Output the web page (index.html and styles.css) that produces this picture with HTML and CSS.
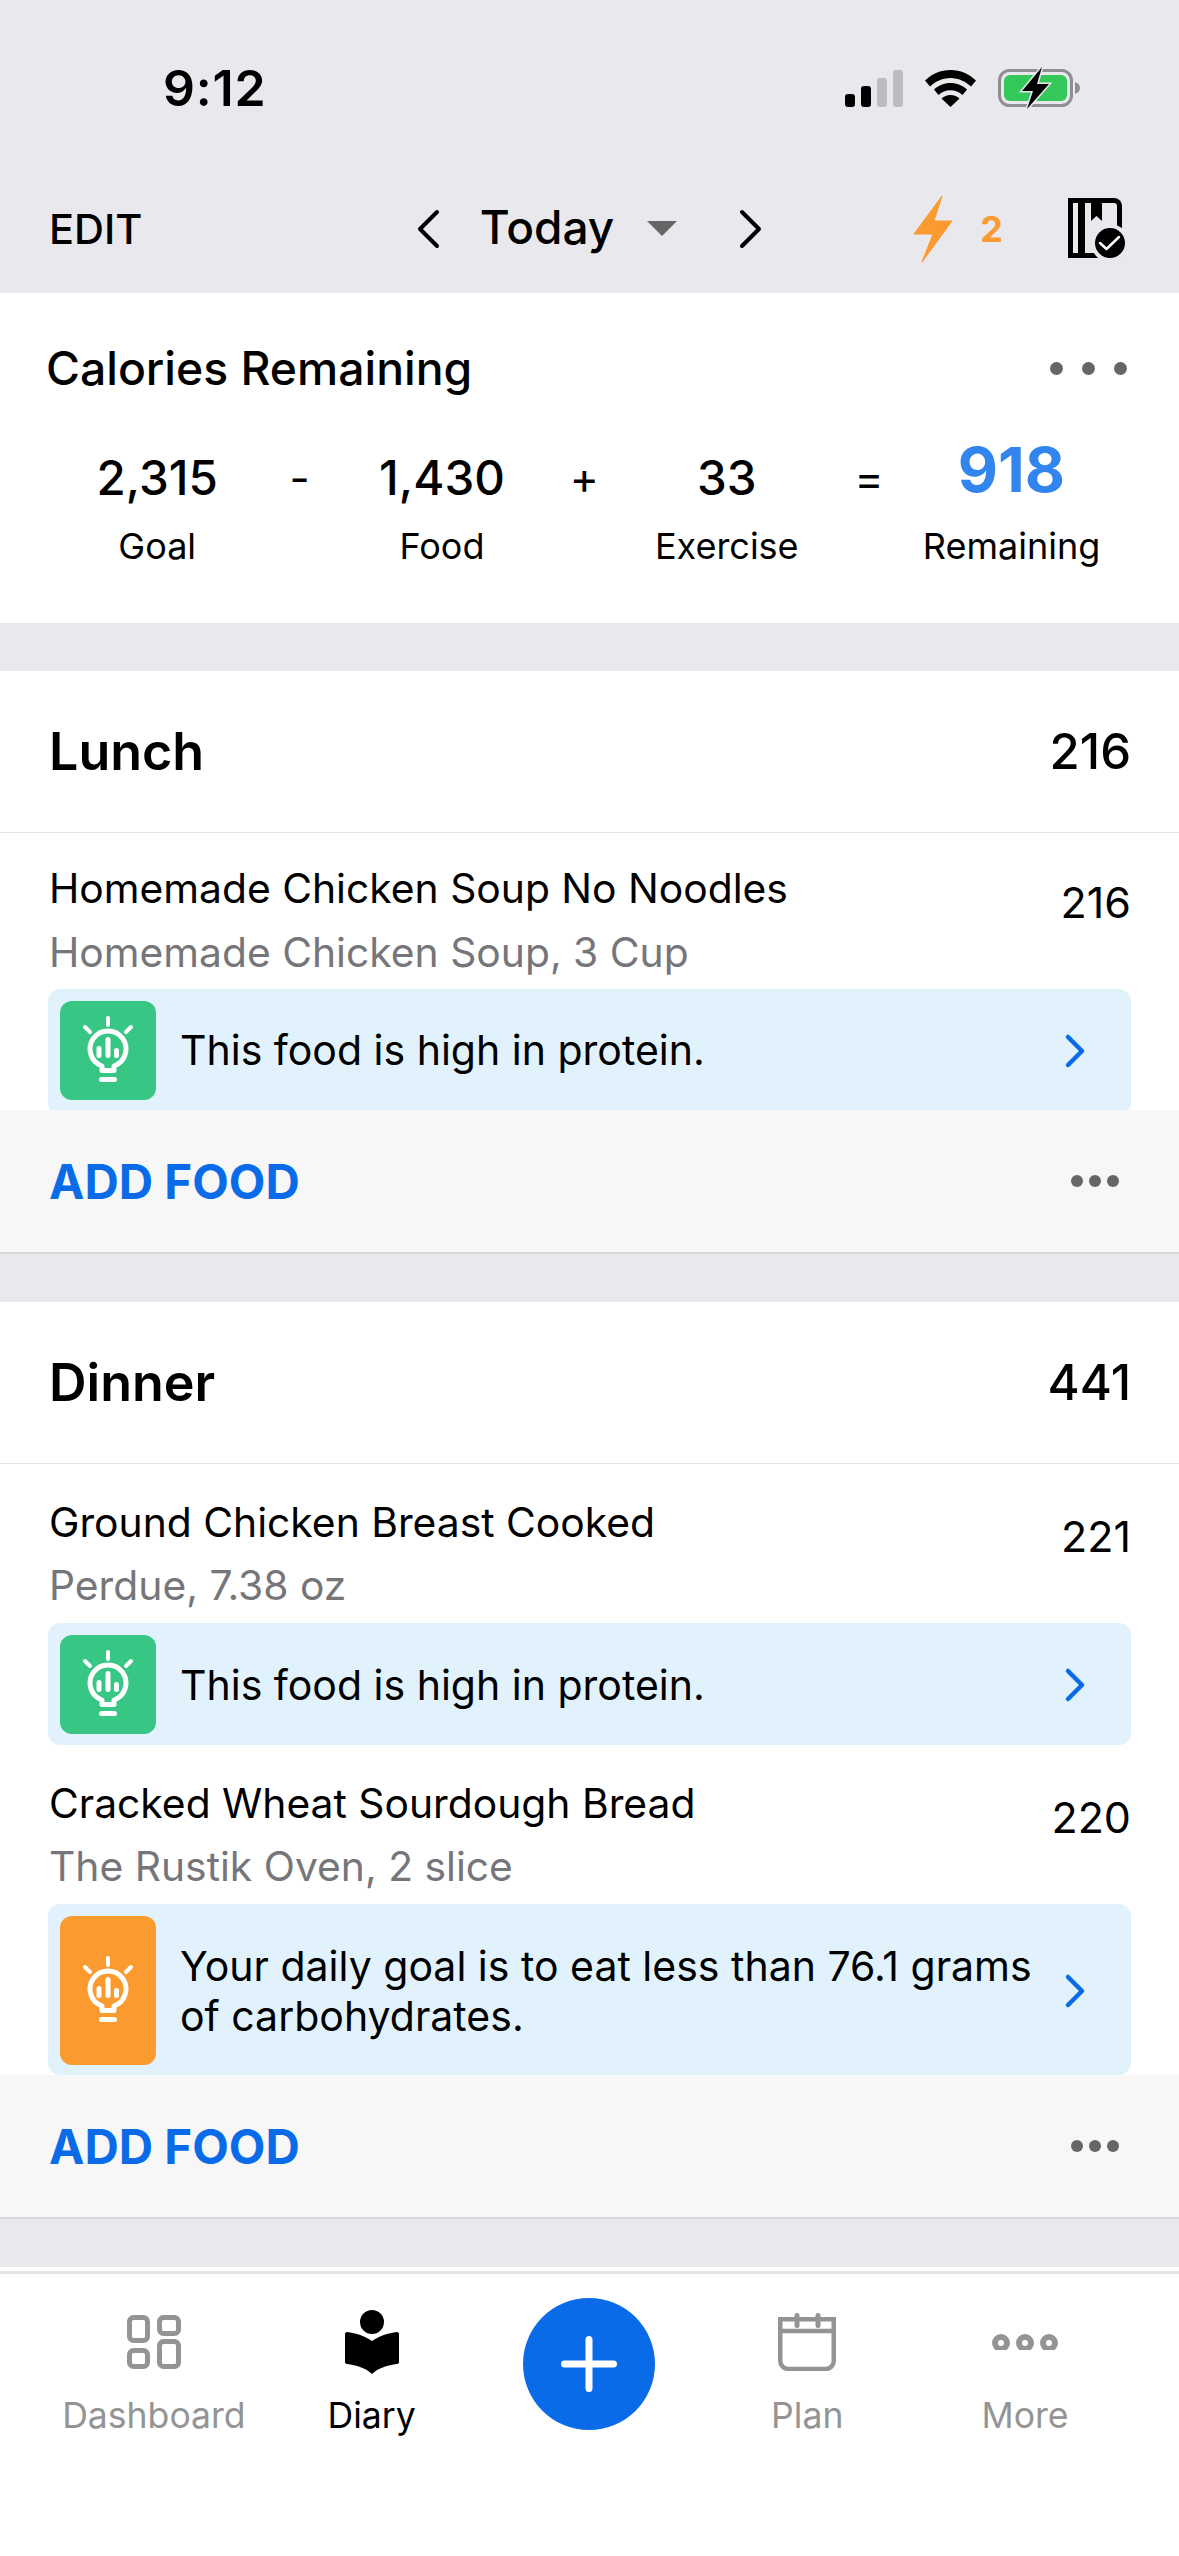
FILE: index.html
```html
<!DOCTYPE html>
<html lang="en">
<head>
    <meta charset="UTF-8">
    <meta name="viewport" content="width=device-width, initial-scale=1.0">
    <title>Diary</title>
    <link rel="stylesheet" href="styles.css">
</head>
<body>
    <svg class="defs" width="0" height="0">
        <symbol id="bulb" viewBox="0 0 60 72">
            <g fill="none" stroke="#fff" stroke-linecap="round" stroke-linejoin="round">
                <path stroke-width="4" d="M30 3v7M7 12l5 5M53 12l-5 5"/>
                <path stroke-width="5" d="M24 51A18 18 0 1 1 36 51v4.500H24z"/>
                <path stroke-width="5" d="M23.500 64.500h13"/>
                <path stroke-width="5" d="M21 33.500v7M30 24.500v16M38.500 35.500v5"/>
            </g>
        </symbol>
        <symbol id="chevron-blue" viewBox="0 0 24 36">
            <path d="M5 4l14 14L5 32" fill="none" stroke="#0a6be8" stroke-width="4.5" stroke-linecap="round" stroke-linejoin="round"/>
        </symbol>
    </svg>

    <header class="top">
        <div class="status">
            <span class="time">9:12</span>
            <div class="status-icons">
                <svg width="58" height="37" viewBox="0 0 58 37">
                    <rect x="0" y="24" width="10" height="13" rx="3" fill="#000"/>
                    <rect x="16" y="16" width="10" height="21" rx="3" fill="#000"/>
                    <rect x="32" y="8" width="10" height="29" rx="3" fill="#bcbcc2"/>
                    <rect x="48" y="0" width="10" height="37" rx="3" fill="#bcbcc2"/>
                </svg>
                <svg width="51" height="37" viewBox="0 0 51 37">
                    <path d="M25.500 0C15.500 0 7 4 0 10.500l5 6C10.500 11.500 17.500 8 25.500 8S40.500 11.500 46 16.500l5-6C44 4 35.500 0 25.500 0z" fill="#000"/>
                    <path d="M25.500 13c-6.500 0-12 2.500-16.500 6.500l4.500 5.500c3.300-3 7.300-4.800 12-4.800s8.700 1.800 12 4.800l4.500-5.500c-4.500-4-10-6.500-16.500-6.500z" fill="#000"/>
                    <path d="M25.500 25c-3.500 0-6.500 1.300-9 3.500l9 8.500 9-8.500c-2.500-2.200-5.500-3.500-9-3.500z" fill="#000"/>
                </svg>
                <svg width="83" height="42" viewBox="0 0 83 42">
                    <rect x="1.500" y="3.500" width="72" height="35" rx="10" fill="none" stroke="#8e8e93" stroke-width="3"/>
                    <rect x="6" y="8" width="63" height="26" rx="6" fill="#34c759"/>
                    <path d="M77 15c3 1 5 3 5 6s-2 5-5 6z" fill="#8e8e93"/>
                    <path d="M44 0L24 24h11l-6 18 22-25H39z" fill="#000" stroke="#e9e9ed" stroke-width="3" paint-order="stroke"/>
                </svg>
            </div>
        </div>
        <nav class="nav">
            <span class="edit">EDIT</span>
            <div class="date-picker">
                <svg width="24" height="40" viewBox="0 0 24 40"><path d="M21 3L4 20l17 17" fill="none" stroke="#000" stroke-width="4" stroke-linecap="round" stroke-linejoin="round"/></svg>
                <span class="today">Today</span>
                <span class="caret"></span>
                <svg width="24" height="40" viewBox="0 0 24 40"><path d="M3 3l17 17L3 37" fill="none" stroke="#000" stroke-width="4" stroke-linecap="round" stroke-linejoin="round"/></svg>
            </div>
            <div class="nav-right">
                <svg width="39" height="66" viewBox="0 0 39 66"><path d="M28 0L0 38h19L8 66l30-41H20z" fill="#fa9a2f" stroke="#fa9a2f" stroke-linejoin="round"/></svg>
                <span class="streak">2</span>
                <svg class="log-icon" width="58" height="62" viewBox="0 0 58 62">
                    <path d="M0 0h46a8 8 0 0 1 8 8v52H0z" fill="#000"/>
                    <rect x="5" y="5" width="5" height="50" fill="#e9e9ed"/>
                    <path d="M17 5h29a3 3 0 0 1 3 3v47H17z" fill="#e9e9ed"/>
                    <path d="M23 5h11v18l-5.500-5L23 23z" fill="#000"/>
                    <circle cx="42" cy="45" r="19" fill="#e9e9ed"/>
                    <circle cx="42" cy="45" r="15" fill="#000"/>
                    <path d="M32 45l6.500 6L51 39" fill="none" stroke="#fff" stroke-width="2.500" stroke-linecap="round" stroke-linejoin="round"/>
                </svg>
            </div>
        </nav>
    </header>

    <main class="content">
        <section class="calories">
            <div class="calories-head">
                <h2>Calories Remaining</h2>
                <div class="dots dots-large"><i></i><i></i><i></i></div>
            </div>
            <div class="sum">
                <div class="sum-col"><b>2,315</b><small>Goal</small></div>
                <div class="sum-op">-</div>
                <div class="sum-col"><b>1,430</b><small>Food</small></div>
                <div class="sum-op">+</div>
                <div class="sum-col"><b>33</b><small>Exercise</small></div>
                <div class="sum-op">=</div>
                <div class="sum-col sum-result"><b>918</b><small>Remaining</small></div>
            </div>
        </section>

        <section class="meal">
            <div class="meal-head"><h3>Lunch</h3><span>216</span></div>
            <div class="food food-first">
                <div class="food-text">
                    <div class="food-name">Homemade Chicken Soup No Noodles</div>
                    <div class="food-sub">Homemade Chicken Soup, 3 Cup</div>
                </div>
                <span class="food-cal">216</span>
            </div>
            <div class="tip tip-cut">
                <div class="tip-icon"><svg width="60" height="72"><use href="#bulb"/></svg></div>
                <p>This food is high in protein.</p>
                <svg class="tip-arrow" width="24" height="36"><use href="#chevron-blue"/></svg>
            </div>
            <div class="meal-foot">
                <span class="add-food">ADD FOOD</span>
                <div class="dots"><i></i><i></i><i></i></div>
            </div>
        </section>

        <section class="meal">
            <div class="meal-head"><h3>Dinner</h3><span>441</span></div>
            <div class="food">
                <div class="food-text">
                    <div class="food-name">Ground Chicken Breast Cooked</div>
                    <div class="food-sub">Perdue, 7.38 oz</div>
                </div>
                <span class="food-cal">221</span>
            </div>
            <div class="tip">
                <div class="tip-icon"><svg width="60" height="72"><use href="#bulb"/></svg></div>
                <p>This food is high in protein.</p>
                <svg class="tip-arrow" width="24" height="36"><use href="#chevron-blue"/></svg>
            </div>
            <div class="food">
                <div class="food-text">
                    <div class="food-name">Cracked Wheat Sourdough Bread</div>
                    <div class="food-sub">The Rustik Oven, 2 slice</div>
                </div>
                <span class="food-cal">220</span>
            </div>
            <div class="tip tip-tall">
                <div class="tip-icon tip-icon-orange"><svg width="60" height="72"><use href="#bulb"/></svg></div>
                <p>Your daily goal is to eat less than 76.1 grams of carbohydrates.</p>
                <svg class="tip-arrow" width="24" height="36"><use href="#chevron-blue"/></svg>
            </div>
            <div class="meal-foot">
                <span class="add-food">ADD FOOD</span>
                <div class="dots"><i></i><i></i><i></i></div>
            </div>
        </section>

        <section class="meal meal-next"></section>
    </main>

    <footer class="tabs">
        <div class="tab">
            <div class="tab-icon">
                <svg width="54" height="54" viewBox="0 0 54 54">
                    <g fill="none" stroke="#949494" stroke-width="5">
                        <rect x="2.500" y="2.500" width="18" height="23" rx="4"/>
                        <rect x="32.500" y="2.500" width="19" height="16" rx="4"/>
                        <rect x="2.500" y="35.500" width="18" height="16" rx="4"/>
                        <rect x="32.500" y="26.500" width="19" height="25" rx="4"/>
                    </g>
                </svg>
            </div>
            <span>Dashboard</span>
        </div>
        <div class="tab tab-active">
            <div class="tab-icon">
                <svg width="54" height="64" viewBox="0 0 54 64">
                    <ellipse cx="27" cy="12" rx="12" ry="12" fill="#000"/>
                    <path d="M2 22c9 1 18 4 25 9 7-5 16-8 25-9 1 0 2 1 2 2v28c0 1-1 2-2 2-9 1-19 4-25 10-6-6-16-9-25-10-1 0-2-1-2-2V24c0-1 1-2 2-2z" fill="#000"/>
                </svg>
            </div>
            <span>Diary</span>
        </div>
        <div class="tab tab-add">
            <div class="add-button">
                <svg width="56" height="56" viewBox="0 0 56 56"><path d="M28 3.500v49M3.500 28h49" stroke="#fff" stroke-width="7" stroke-linecap="round"/></svg>
            </div>
        </div>
        <div class="tab">
            <div class="tab-icon">
                <svg width="58" height="58" viewBox="0 0 58 58">
                    <g fill="none" stroke="#949494" stroke-width="4.500">
                        <path d="M2.250 6.250h53.500V48a8 8 0 0 1-8 8h-37.500a8 8 0 0 1-8-8z"/>
                        <path d="M2.250 18h53.500"/>
                        <path stroke-linecap="round" stroke-width="5" d="M19 2.500v10M40 2.500v10"/>
                    </g>
                </svg>
            </div>
            <span>Plan</span>
        </div>
        <div class="tab">
            <div class="tab-icon">
                <svg width="66" height="16" viewBox="0 0 66 16">
                    <g fill="none" stroke="#949494" stroke-width="6">
                        <circle cx="9" cy="9" r="6"/>
                        <circle cx="33" cy="9" r="6"/>
                        <circle cx="57" cy="9" r="6"/>
                    </g>
                </svg>
            </div>
            <span>More</span>
        </div>
    </footer>
</body>
</html>
```

FILE: styles.css
```css
* {
    box-sizing: border-box;
}

body {
    margin: 0;
    width: 1179px;
    height: 2556px;
    overflow: hidden;
    display: flex;
    flex-direction: column;
    background: #fff;
    color: #000;
    font-family: Inter, "Liberation Sans", sans-serif;
}

.defs {
    position: absolute;
}

/* status bar and date nav */
.top {
    height: 293px;
    flex: none;
    background: #e9e9ed;
}

.status {
    height: 176px;
    display: flex;
    align-items: center;
    justify-content: space-between;
    padding: 0 98px 0 163px;
}

.time {
    font-size: 50px;
    font-weight: 600;
    letter-spacing: 0.8px;
}

.status-icons {
    display: flex;
    align-items: center;
    gap: 22px;
}

.nav {
    display: grid;
    grid-template-columns: 1fr auto 1fr;
    align-items: center;
    height: 105px;
    padding: 0 49px;
}

.edit {
    font-size: 41.5px;
    font-weight: 500;
}

.date-picker {
    display: flex;
    align-items: center;
}

.today {
    font-size: 46px;
    font-weight: 500;
    margin: -3px 0 0 40px;
}

.caret {
    width: 0;
    height: 0;
    margin: 0 62px 0 33px;
    border-left: 15px solid transparent;
    border-right: 15px solid transparent;
    border-top: 15px solid #666;
}

.nav-right {
    display: flex;
    align-items: center;
    justify-content: flex-end;
    margin-right: 4px;
}

.streak {
    color: #fa9a2f;
    font-size: 36px;
    font-weight: 700;
    margin-left: 27px;
}

.log-icon {
    margin-left: 65px;
}

/* scrolling content */
.content {
    flex: 1;
    overflow: hidden;
    background: #e9e9ed;
}

.calories {
    height: 330px;
    padding: 0 52px 0 46px;
    background: #fff;
}

.calories-head {
    display: flex;
    align-items: center;
    justify-content: space-between;
    height: 150px;
}

.calories-head h2 {
    margin: 0;
    font-size: 46.3px;
    font-weight: 500;
}

.sum {
    display: grid;
    grid-template-columns: repeat(7, 142.4px);
    margin-left: 40px;
    padding-top: 7px;
}

.sum-col {
    display: flex;
    flex-direction: column;
    align-items: center;
    white-space: nowrap;
}

.sum-col b {
    font-size: 47.5px;
    font-weight: 500;
    line-height: 56px;
}

.sum-col small {
    margin-top: 18px;
    font-size: 36px;
    line-height: 44px;
}

.sum-op {
    font-size: 44px;
    line-height: 56px;
    text-align: center;
}

.sum-result b {
    color: #3385ee;
    font-size: 62px;
    font-weight: 700;
    line-height: 56px;
    margin-top: -8px;
    margin-bottom: 8px;
}

.dots {
    display: flex;
    gap: 6px;
    margin-right: 11px;
}

.dots i {
    width: 12px;
    height: 12px;
    border-radius: 50%;
    background: #666;
}

.dots-large {
    gap: 19px;
    margin-right: 0;
}

.dots-large i {
    width: 13px;
    height: 13px;
}

.meal {
    margin-top: 48px;
    background: #fff;
}

.meal-next {
    min-height: 20px;
}

.meal-head {
    display: flex;
    align-items: center;
    justify-content: space-between;
    height: 162px;
    padding: 0 48px 0 49px;
    border-bottom: 1px solid #e3e3e6;
}

.meal-head h3 {
    margin: 0;
    font-size: 52px;
    font-weight: 600;
}

.meal-head span {
    font-size: 49px;
    font-weight: 500;
}

.food {
    display: flex;
    justify-content: space-between;
    height: 159px;
    padding: 28px 48px 0 49px;
}

.food-first {
    height: 156px;
    padding-top: 25px;
}

.food-name {
    font-size: 40.8px;
    line-height: 60px;
}

.food-sub {
    margin-top: 3px;
    color: #76767a;
    font-size: 40.8px;
    line-height: 60px;
}

.food-first .food-sub {
    margin-top: 4px;
}

.food-cal {
    margin-top: 14px;
    font-size: 43px;
    line-height: 60px;
}

.tip {
    display: flex;
    align-items: center;
    height: 122px;
    margin: 0 48px;
    padding: 12px 44px 11px 12px;
    background: #e1f2fd;
    border-radius: 12px;
}

.tip-tall {
    height: 171px;
    padding-bottom: 10px;
}

.tip-icon {
    flex: none;
    align-self: stretch;
    width: 96px;
    display: flex;
    align-items: center;
    justify-content: center;
    background: #38c684;
    border-radius: 12px;
}

.tip-icon-orange {
    background: #fa9a2f;
}

.tip p {
    flex: 1;
    margin: 0 16px 0 24px;
    font-size: 41px;
    line-height: 50px;
}

.tip-arrow {
    flex: none;
}

/* bottom of the card slides under the ADD FOOD bar */
.tip-cut {
    height: 126px;
    margin-bottom: -5px;
    padding-bottom: 15px;
}

.tip-cut p {
    margin-top: -2px;
}

.meal-foot {
    position: relative;
    display: flex;
    align-items: center;
    justify-content: space-between;
    height: 144px;
    padding: 0 49px;
    background: #f7f7f7;
    border-bottom: 2px solid #d8d8dc;
}

.add-food {
    color: #0a6be8;
    font-size: 47.5px;
    font-weight: 700;
}

/* bottom tabs */
.tabs {
    height: 285px;
    flex: none;
    display: grid;
    grid-template-columns: repeat(5, 1fr);
    padding: 0 45px;
    background: #fff;
    border-top: 3px solid #e5e5e5;
}

.tab {
    display: flex;
    flex-direction: column;
    align-items: center;
    padding-top: 33px;
    color: #949494;
    font-size: 35.6px;
}

.tab-icon {
    height: 70px;
    margin-bottom: 17px;
    display: flex;
    align-items: center;
}

.tab-active {
    color: #000;
}

.tab-add {
    padding-top: 24px;
}

.add-button {
    width: 132px;
    height: 132px;
    display: flex;
    align-items: center;
    justify-content: center;
    background: #0a6be8;
    border-radius: 50%;
}
```
